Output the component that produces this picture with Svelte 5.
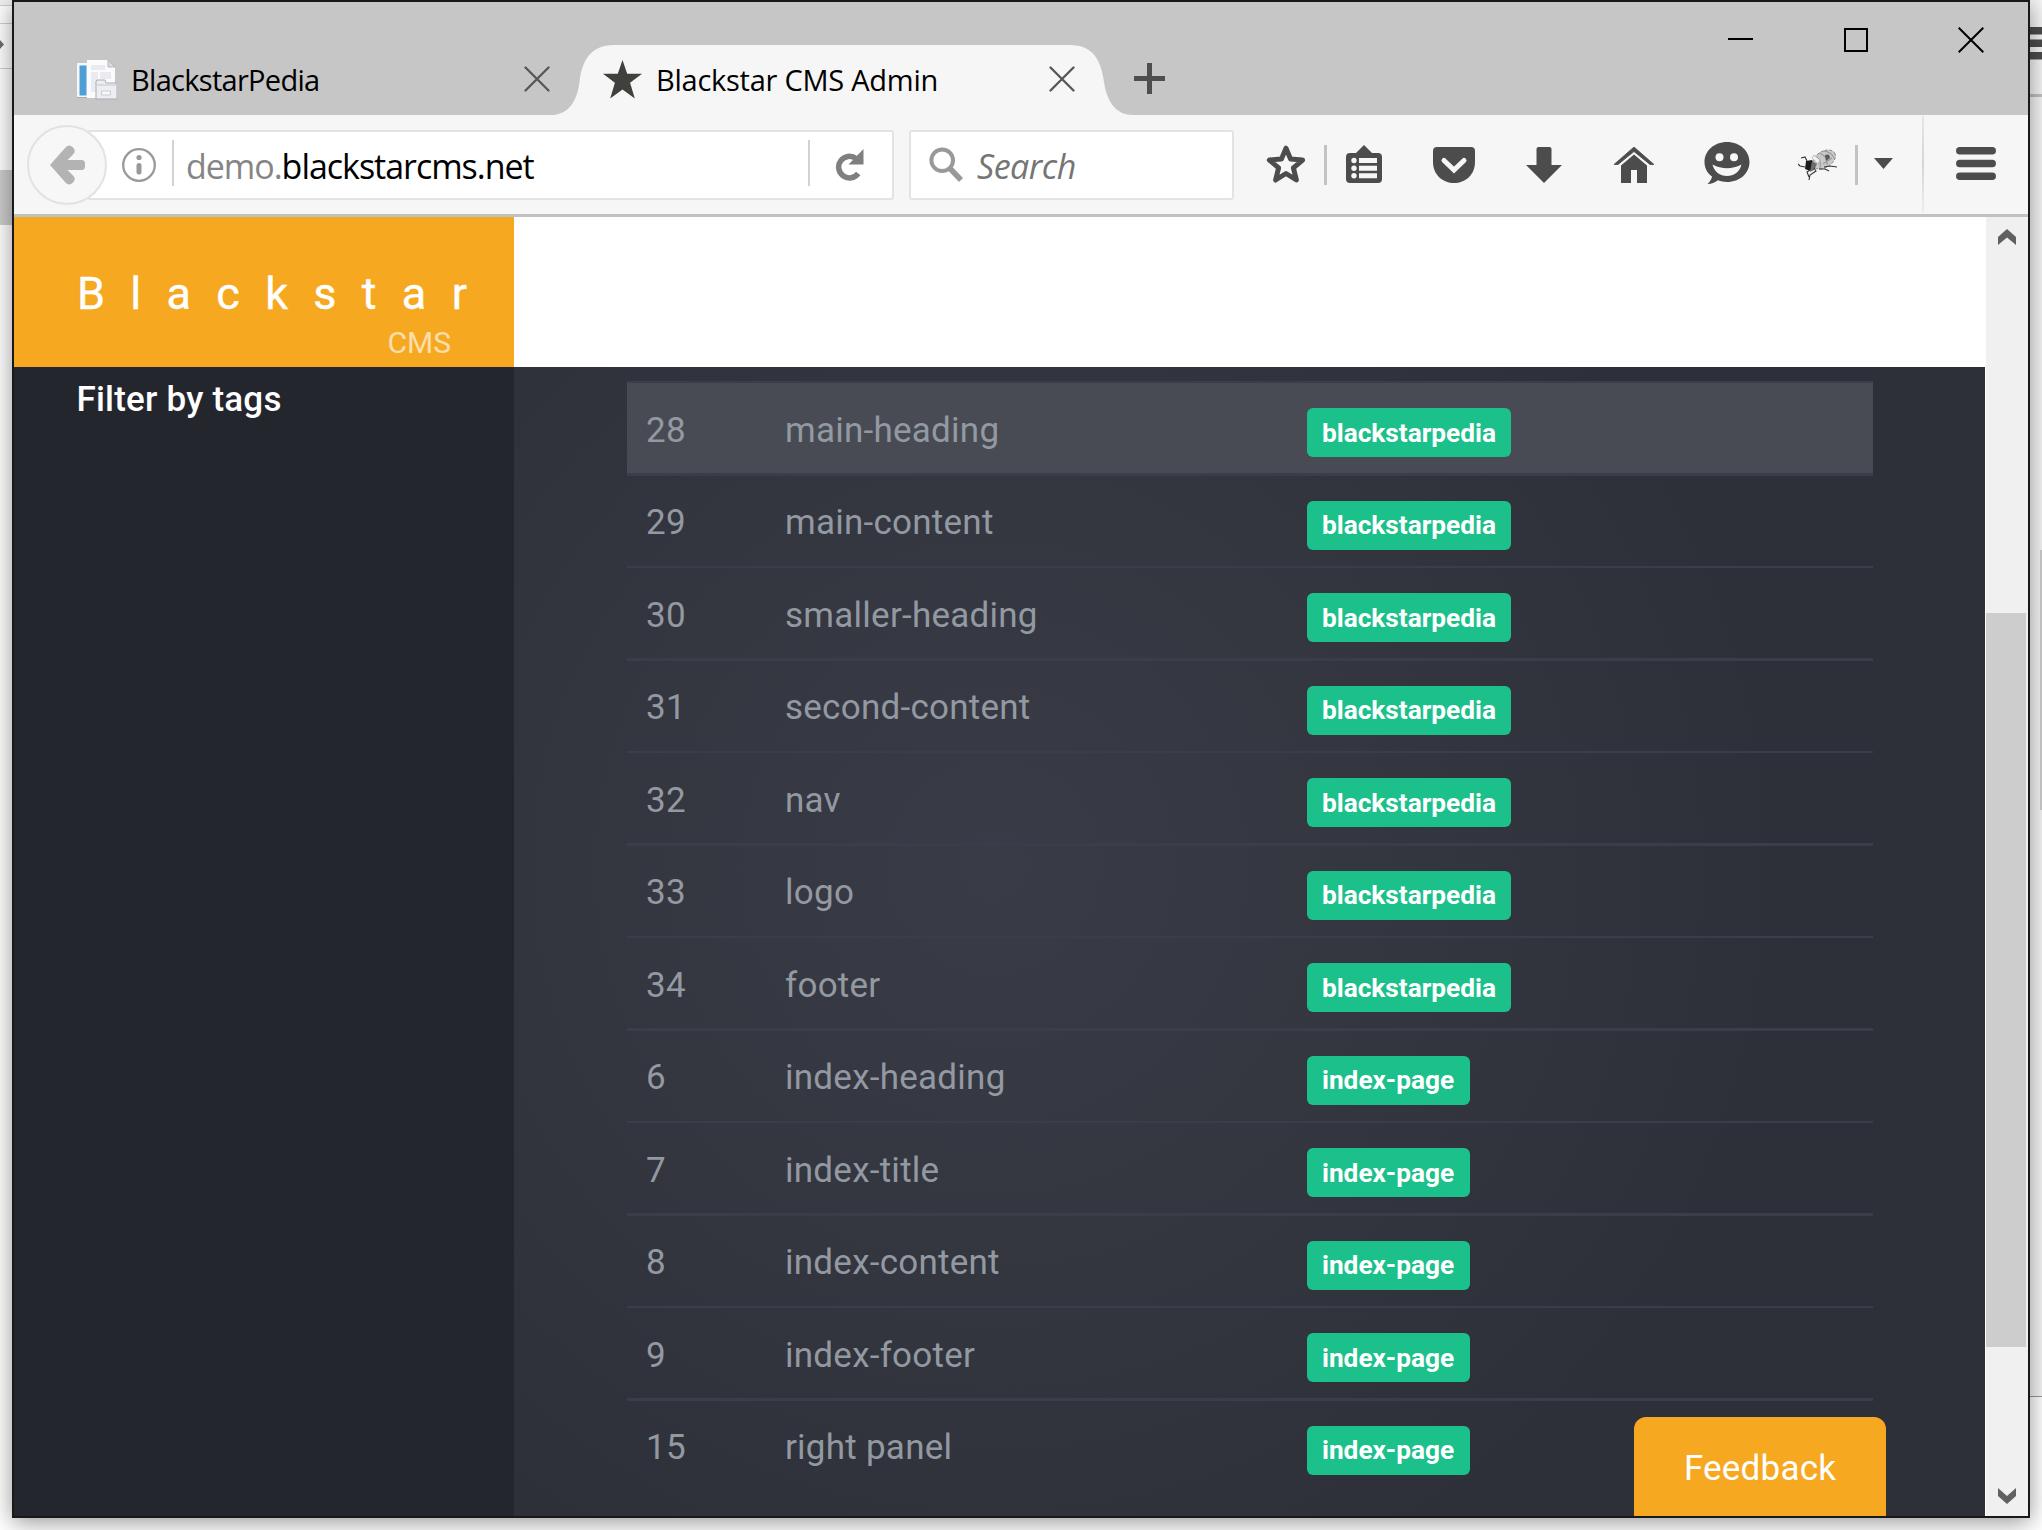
<script>
  const rows = [
    { id: 28, name: 'main-heading', tag: 'blackstarpedia', active: true },
    { id: 29, name: 'main-content', tag: 'blackstarpedia' },
    { id: 30, name: 'smaller-heading', tag: 'blackstarpedia' },
    { id: 31, name: 'second-content', tag: 'blackstarpedia' },
    { id: 32, name: 'nav', tag: 'blackstarpedia' },
    { id: 33, name: 'logo', tag: 'blackstarpedia' },
    { id: 34, name: 'footer', tag: 'blackstarpedia' },
    { id: 6, name: 'index-heading', tag: 'index-page' },
    { id: 7, name: 'index-title', tag: 'index-page' },
    { id: 8, name: 'index-content', tag: 'index-page' },
    { id: 9, name: 'index-footer', tag: 'index-page' },
    { id: 15, name: 'right panel', tag: 'index-page' }
  ];
</script>

<div class="desktop">
  <!-- slivers of the windows lying behind the browser -->
  <div class="behind-left">
    <svg width="12" height="226" viewBox="0 0 12 226">
      <path d="M0 0H12V5H0z" fill="#f1f1f3" />
      <path d="M0 5.500H12M0 23.500H12M0 68.500H12" stroke="#cfcfcf" />
      <path d="M0 40l4 4.500-4 4.500z" fill="#6d6d6d" />
      <path d="M0 170H12V225H0z" fill="#cdcdcd" />
    </svg>
  </div>
  <div class="behind-right">
    <svg width="12" height="98" viewBox="0 0 12 98">
      <path d="M0 27h12v7.500H0zM0 39.500h12v7.500H0zM0 52h12v7.500H0z" fill="#4c4c4c" />
      <path d="M0 94h12v3H0z" fill="#c1c1c1" />
    </svg>
    <div class="behind-thumb"></div>
  </div>

  <main class="window">
    <header class="tabs">
      <div class="tab first">
        <svg width="40" height="40" viewBox="0 0 40 40">
          <path d="M0 3h17v35H0z" fill="#f3f7fa" />
          <path d="M2.500 5.500h7v30h-7z" fill="#4f9fd2" />
          <path d="M0 37.500h18" stroke="#a9a9a9" />
          <path d="M10 0h21l7 7v31H10z" fill="#fbfbfc" />
          <path d="M31 0v7h7z" fill="#dcdcde" stroke="#aaa" stroke-width=".8" />
          <path d="M14 5h14v5H14zM14 12h7v20h-7zM23 12h11v7H23z" fill="#e9ebf0" />
          <path d="M19 21l1-1h8l1 3h11v16H19z" fill="#eceef2" stroke="#a9acb2" stroke-width="1" />
          <path d="M20 25h19" stroke="#c3c5ca" />
          <path d="M24.500 31h9v4h-9z" fill="#f8f8fa" stroke="#c9cbd0" />
        </svg>
        <span class="title t1">BlackstarPedia</span>
        <svg class="x" width="26" height="26" viewBox="0 0 26 26"><path d="M1.500 1.500l23 23M24.500 1.500l-23 23" stroke="#565656" stroke-width="2.300" stroke-linecap="round" /></svg>
      </div>
      <div class="tab active">
        <svg class="shape" width="580" height="70" viewBox="0 0 580 70">
          <path d="M0 70C15 69 24 57 26.500 37C29 15 38 0 61 0H517C540 0 548 15 551 37C554 57 563 70 580 70z" fill="#f6f6f6" />
        </svg>
        <svg class="fav" width="39" height="39" viewBox="0 0 39 39"><path d="M19.500 0L24.200 13.800H39L27.100 22.800L31.800 38.500L19.500 29.600L7.200 38.500L11.900 22.800L0 13.800H14.800z" fill="#40403c" /></svg>
        <span class="title t2">Blackstar CMS Admin</span>
        <svg class="x" width="26" height="26" viewBox="0 0 26 26"><path d="M1.500 1.500l23 23M24.500 1.500l-23 23" stroke="#565656" stroke-width="2.300" stroke-linecap="round" /></svg>
      </div>
      <svg class="plus" width="31" height="31" viewBox="0 0 31 31"><path d="M15.500 0v31M0 15.500h31" stroke="#4e4e4e" stroke-width="5" /></svg>
      <div class="controls">
        <svg width="26" height="26" viewBox="0 0 26 26"><path d="M0 12h25" stroke="#000" stroke-width="2" /></svg>
        <svg width="26" height="26" viewBox="0 0 26 26"><path d="M2 2h22v22H2z" fill="none" stroke="#000" stroke-width="2" /></svg>
        <svg width="26" height="26" viewBox="0 0 26 26"><path d="M.7.7l24.600 24.600M25.300.7L.7 25.300" stroke="#000" stroke-width="2" /></svg>
      </div>
    </header>

    <nav class="toolbar">
      <svg class="back" width="80" height="80" viewBox="0 0 80 80">
        <circle cx="40" cy="40" r="39" fill="#f7f7f7" stroke="#e2e2e2" stroke-width="2" />
        <path d="M23 40L38.500 22.500Q42 18.500 46 22.500Q49.500 26 46 29.500L40.500 35H54.500Q58 35 58 38.500V41.500Q58 45 54.500 45H40.500L46 50.500Q49.500 54 46 57.500Q42 61.500 38.500 57.500z" fill="#b3b3b3" />
      </svg>
      <div class="field url">
        <svg class="info" width="34" height="34" viewBox="0 0 34 34">
          <circle cx="17" cy="17" r="15.800" fill="none" stroke="#999" stroke-width="2.300" />
          <circle cx="17" cy="9.500" r="2.600" fill="#999" />
          <path d="M17 17.500v6.500" stroke="#999" stroke-width="5" stroke-linecap="round" />
        </svg>
        <i class="bar"></i>
        <span class="address"><span class="sub">demo.</span>blackstarcms.net</span>
        <i class="bar"></i>
        <svg class="reload" width="30" height="32" viewBox="0 0 30 32">
          <path d="M21 9.500A10.800 10.800 0 1 0 23.200 24.500" fill="none" stroke="#7f7f7f" stroke-width="5.500" />
          <path d="M28.500 0V15.500H13.500z" fill="#7f7f7f" />
        </svg>
      </div>
      <div class="field search">
        <svg width="36" height="36" viewBox="0 0 36 36">
          <circle cx="13.200" cy="13.200" r="10.800" fill="none" stroke="#999" stroke-width="4" />
          <path d="M21 21.500L32 33" stroke="#999" stroke-width="5.500" />
        </svg>
        <span>Search</span>
      </div>
      <div class="cell star"><svg width="40" height="40" viewBox="0 0 40 40"><path d="M20 4.200L24.600 15.100L36.600 16.100L27.400 23.800L30.400 36L20 29.500L9.600 36L12.600 23.800L3.400 16.100L15.400 15.100z" fill="none" stroke="#4c4c4c" stroke-width="5" stroke-linejoin="round" /></svg></div>
      <i class="sep"></i>
      <div class="cell clip"><svg width="36" height="38" viewBox="0 0 36 38">
        <path d="M18 0L26 8H32Q36 8 36 12V34Q36 38 32 38H4Q0 38 0 34V12Q0 8 4 8H10z" fill="#4c4c4c" />
        <path d="M13 13h18v5H13zM13 20.700h18v5H13zM13 28.300h18v5H13z" fill="#f6f6f6" />
        <g fill="#f6f6f6"><circle cx="8" cy="15.500" r="2.700" /><circle cx="8" cy="23.200" r="2.700" /><circle cx="8" cy="30.800" r="2.700" /></g>
      </svg></div>
      <div class="cell pocket"><svg width="42" height="36" viewBox="0 0 42 36"><path d="M4 0H38Q42 0 42 4V15C42 28 32 36 21 36S0 28 0 15V4Q0 0 4 0z" fill="#4c4c4c" /><path d="M11 13.500L21 23L31 13.500" fill="none" stroke="#f6f6f6" stroke-width="5" stroke-linecap="round" /></svg></div>
      <div class="cell down"><svg width="36" height="36" viewBox="0 0 36 36"><path d="M12.500 0H23.500Q25.500 0 25.500 2V18H36L18 36L0 18H10.500V2Q10.500 0 12.500 0z" fill="#4c4c4c" /></svg></div>
      <div class="cell home"><svg width="40" height="36" viewBox="0 0 40 36"><path d="M20 0L40 17.500H36L20 4.500L4 17.500H0z" fill="#4c4c4c" stroke="#4c4c4c" stroke-width=".8" /><path d="M20 7.500L33 18.500V36H23V23H17V36H7V18.500z" fill="#4c4c4c" /></svg></div>
      <div class="cell smile"><svg width="46" height="43" viewBox="0 0 46 43"><path d="M23 0C36 0 45.500 9 45.500 20S36 40 23 40C19.500 40 17 39.600 14 38.300C11 40.500 7.500 42 3.500 42C6 39.500 7.700 37 8 34.500C3.500 31.500.5 26 .5 20C.5 9 10 0 23 0z" fill="#4c4c4c" /><circle cx="15.500" cy="15.300" r="4" fill="#f6f6f6" /><circle cx="30" cy="15.300" r="4" fill="#f6f6f6" /><path d="M8.500 22.500Q23 30 37.500 22.500C36 29.500 30 34 23 34S10 29.500 8.500 22.500z" fill="#f6f6f6" /></svg></div>
      <div class="cell bug"><svg width="40" height="32" viewBox="0 0 40 32">
        <ellipse cx="26" cy="10.500" rx="12.500" ry="8" transform="rotate(-32 26 10.500)" fill="#c9c9c9" stroke="#777" stroke-width=".8" stroke-dasharray="3 1.500" />
        <path d="M17 7Q24 10 22 19M21 4Q30 7 29 16M25 2Q34 3 36 9M25 15l9-6" fill="none" stroke="#9b9b9b" stroke-width="1.200" />
        <path d="M27 6q5-2 5 3l-4 3z" fill="#5a5a5a" />
        <path d="M16 6l6 5-2 4-6-6z" fill="#f2f2f2" stroke="#888" stroke-width=".5" />
        <path d="M8 12l6-1 2 6-4 5-5-2z" fill="#1c1c1c" />
        <path d="M14 12l5 3-3 6-4 2z" fill="#6d6d6d" />
        <path d="M9 12L7 8L3 9M7 18L2 17L0 15M16 19l2 3-6 4-1 5M12 21l-3 2 2 5M21 20l6 0 4 2M26 18l6-1 7 1" fill="none" stroke="#333" stroke-width="1.100" />
      </svg></div>
      <i class="sep"></i>
      <div class="cell caret"><svg width="19" height="11" viewBox="0 0 19 11"><path d="M0 0H19L9.500 11z" fill="#4c4c4c" /></svg></div>
      <i class="divider"></i>
      <div class="cell menu"><svg width="40" height="33" viewBox="0 0 40 33"><path d="M3.800 3.800H36.200M3.800 16.500H36.200M3.800 29.200H36.200" stroke="#4c4c4c" stroke-width="7.500" stroke-linecap="round" /></svg></div>
    </nav>

    <div class="page">
      <div class="brand">
        <div class="logo">Blackstar</div>
        <div class="cms">CMS</div>
      </div>
      <div class="topbar"></div>
      <aside>Filter by tags</aside>
      <section>
        <div class="table">
          {#each rows as row}
            <div class="row" class:active={row.active}>
              <span class="id">{row.id}</span>
              <span class="name">{row.name}</span>
              <span class="badge">{row.tag}</span>
            </div>
          {/each}
        </div>
        <div class="feedback">Feedback</div>
      </section>
      <div class="scroll">
        <svg width="18" height="16" viewBox="0 0 18 16"><path d="M9 0L18 8V16L9 8.500L0 16V8z" fill="#606060" /></svg>
        <div class="thumb"></div>
        <svg width="18" height="16" viewBox="0 0 18 16"><path d="M9 16L18 8V0L9 8L0 0V8z" fill="#606060" /></svg>
      </div>
    </div>
  </main>
</div>

<style>
  :global(body) { margin: 0; background: #fff; }
  .desktop { position: relative; box-sizing: border-box; width: 2042px; height: 1530px; padding: 0 12px; overflow: hidden; background: #fff; }
  svg { display: block; flex: none; }
  .behind-left { position: absolute; left: 0; top: 0; width: 12px; height: 1530px; }
  .behind-right { position: absolute; right: 0; top: 0; width: 12px; height: 1396px; background: #f6f6f6; border-bottom: 1px solid #999; }
  .behind-thumb { margin: 452px 0 0 10px; height: 260px; background: #cdcdcd; }
  .window {
    position: relative; box-sizing: border-box; width: 2018px; height: 1518px;
    border: 2px solid #191919; background: #f6f6f6;
    display: flex; flex-direction: column;
    box-shadow: 0 4px 22px rgba(0, 0, 0, .42);
    font-family: Roboto, sans-serif;
  }

  .tabs { height: 113px; background: #c6c6c6; display: flex; flex: none; font-family: "Open Sans", "Noto Sans", sans-serif; }
  .tab { position: relative; box-sizing: border-box; display: flex; height: 70px; margin-top: 43px; }
  .tab.first { width: 539px; padding: 15px 3px 0 63px; }
  .tab.active { width: 580px; padding: 15px 0 0 50px; }
  .shape { position: absolute; left: 0; top: 0; }
  .fav { position: relative; }
  .title { position: relative; font-size: 29px; line-height: 40px; color: #000; white-space: nowrap; }
  .t1 { margin-left: 14px; width: 393px; letter-spacing: -.7px; }
  .t2 { margin-left: 14px; width: 393px; letter-spacing: -.25px; }
  .x { position: relative; margin-top: 6px; }
  .plus { margin: 61px 0 0 1px; }
  .controls { display: flex; gap: 89px; margin: 25px 44px 0 auto; }

  .toolbar { height: 99px; flex: none; display: flex; align-items: center; border-bottom: 3px solid #c1c1c1; }
  .back { position: relative; z-index: 1; margin: 1px -20px 0 13px; }
  .field { box-sizing: border-box; height: 70px; margin-top: 1px; border: 2px solid #e3e3e3; border-radius: 3px; background: #fff; display: flex; align-items: center; font-family: "Open Sans", "Noto Sans", sans-serif; font-size: 34px; line-height: 66px; white-space: nowrap; }
  .url { width: 807px; padding-left: 33px; }
  .bar { width: 2px; height: 46px; margin-top: -4px; background: #d2d2d2; }
  .info { margin-right: 16px; }
  .address { box-sizing: border-box; width: 634px; padding: 2px 0 0 12px; letter-spacing: -1.030px; }
  .sub { color: #858585; }
  .reload { margin-left: 25px; }
  .search { width: 325px; margin-left: 15px; padding-left: 18px; }
  .search span { margin-left: 12px; padding-top: 2px; color: #757575; font-style: italic; letter-spacing: -.5px; }
  .cell { display: flex; justify-content: center; }
  .star { width: 76px; margin: -1px 0 0 14px; }
  .sep { width: 3px; height: 40px; background: #c3c3c3; }
  .clip { width: 74px; margin-top: -2px; }
  .pocket { width: 106px; }
  .down { width: 74px; }
  .home { width: 106px; }
  .smile { width: 79px; margin-top: -3px; }
  .bug { width: 75px; margin-left: 14px; }
  .caret { width: 50px; margin-top: -2px; }
  .divider { width: 2px; height: 97px; margin-left: 14px; background: linear-gradient(#e6e6e6, #d4d4d4 50%, #eee); }
  .menu { width: 104px; margin-top: -2px; }

  .page { flex: 1; min-height: 0; display: grid; grid-template: 150px 1149px / 500px 1471px 43px; }
  .brand { background: #f6a821; color: #fff; }
  .logo { padding: 50px 0 0 63px; font-size: 45px; line-height: 53px; letter-spacing: 25.300px; white-space: nowrap; -webkit-text-stroke: .4px #fff; }
  .cms { padding: 5px 63px 0 0; text-align: right; font-size: 30px; line-height: 36px; opacity: .62; }
  .topbar { background: #fff; }
  aside { background: #24262e; color: #fff; font-size: 35px; font-weight: 500; line-height: 41px; padding: 12px 0 0 62.500px; letter-spacing: .2px; }
  section { display: flex; flex-direction: column; position: relative; overflow: hidden; background: radial-gradient(circle at 480px 500px, #393b46 0, #2e3039 800px); }
  .table { margin: 14px 112px 0 113px; }
  .row { box-sizing: border-box; display: flex; height: 92px; border-top: 2px solid #3b3d4b; color: #9399a1; font-size: 35px; line-height: 41px; padding: 27px 0 0 19px; }
  .row:nth-child(even) { height: 93px; border-top-width: 3px; padding-top: 26px; }
  .row.active { background: #494b54; background-clip: padding-box; }
  .id { width: 139px; letter-spacing: .3px; }
  .name { width: 522px; letter-spacing: .25px; }
  .badge { height: 49px; padding: 0 15.500px 0 15px; border-radius: 6px; background: #1cc08b; color: #fff; font-size: 26.250px; font-weight: 700; line-height: 50px; margin-top: -2px; letter-spacing: -.02px; }
  .row:nth-child(even) .badge { margin-top: -1px; line-height: 49px; }
  .feedback { position: absolute; left: 1120px; bottom: 0; width: 252px; height: 99px; border-radius: 12px 12px 0 0; background: #f6a821; color: #fff; font-size: 35px; line-height: 104px; letter-spacing: .2px; text-align: center; }
  .scroll { grid-column: 3; grid-row: 1 / 3; box-sizing: border-box; padding: 12px 1px 12px 0; border-left: 1px solid #fff; background: #f0f0f0; display: flex; flex-direction: column; align-items: center; }
  .thumb { align-self: stretch; margin: 368px 1px auto 0; height: 734px; background: #cdcdcd; }
</style>
